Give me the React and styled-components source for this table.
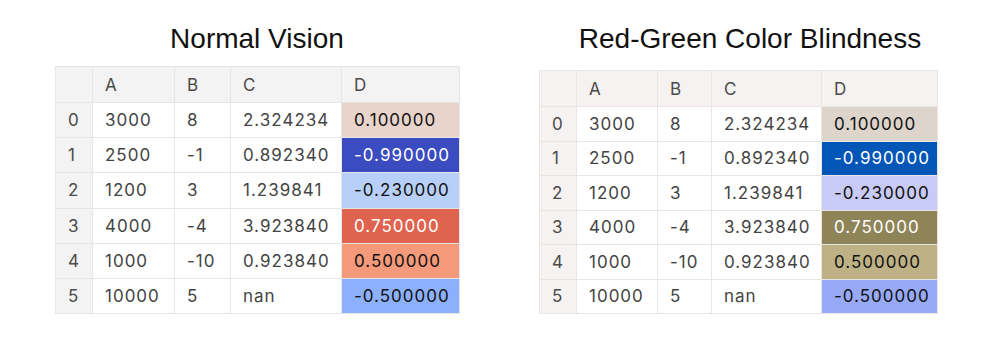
import styled, { createGlobalStyle } from "styled-components";

const GlobalStyle = createGlobalStyle`
    html, body {
        margin: 0;
        padding: 0;
        background: #FFFFFF;
    }
`;

const rows = [
    ['0', '3000', '8', '2.324234', '0.100000'],
    ['1', '2500', '-1', '0.892340', '-0.990000'],
    ['2', '1200', '3', '1.239841', '-0.230000'],
    ['3', '4000', '-4', '3.923840', '0.750000'],
    ['4', '1000', '-10', '0.923840', '0.500000'],
    ['5', '10000', '5', 'nan', '-0.500000'],
];

const normal = {
    title: 'Normal Vision',
    shift: 0,
    top: 11,
    cols: [37, 82, 56, 111, 118],
    head: 36,
    row: 35.2,
    headBg: '#F3F3F3',
    line: '#E6E6E6',
    colors: [
        ['#E8D4CA', '#111'],
        ['#3B4CC0', '#FFF'],
        ['#B8D0F9', '#111'],
        ['#DF634E', '#FFF'],
        ['#F49A7B', '#111'],
        ['#8CAFFE', '#111'],
    ],
};

const blind = {
    title: 'Red-Green Color Blindness',
    shift: 24,
    top: 15,
    cols: [37, 81, 54, 110, 116],
    head: 36,
    row: 34.5,
    headBg: '#F5F2F1',
    line: '#EAE4E2',
    colors: [
        ['#DDD5CB', '#111'],
        ['#0256B7', '#FFF'],
        ['#C7CBF5', '#111'],
        ['#8F8457', '#FFF'],
        ['#BEB185', '#111'],
        ['#97A9F8', '#111'],
    ],
};

function Panel({ data }) {
    return (
        <Column>
            <Title $shift={data.shift}>{data.title}</Title>
            <Table $top={data.top} $line={data.line}>
                <colgroup>
                    {data.cols.map((w, i) => <col key={i} style={{ width: w }} />)}
                </colgroup>
                <thead>
                    <tr style={{ height: data.head }}>
                        <Head $bg={data.headBg} $line={data.line}></Head>
                        {['A', 'B', 'C', 'D'].map((h) => (
                            <Head key={h} $bg={data.headBg} $line={data.line}>{h}</Head>
                        ))}
                    </tr>
                </thead>
                <tbody>
                    {rows.map((r, i) => (
                        <tr key={i} style={{ height: data.row }}>
                            <Head $bg={data.headBg} $line={data.line}>{r[0]}</Head>
                            <Cell $line={data.line}>{r[1]}</Cell>
                            <Cell $line={data.line}>{r[2]}</Cell>
                            <Cell $line={data.line}>{r[3]}</Cell>
                            <Cell $line={data.line} $bg={data.colors[i][0]} $fg={data.colors[i][1]}>{r[4]}</Cell>
                        </tr>
                    ))}
                </tbody>
            </Table>
        </Column>
    );
}

export default function App() {
    return (
        <Page>
            <GlobalStyle />
            <Left>
                <Panel data={normal} />
            </Left>
            <Right>
                <Panel data={blind} />
            </Right>
        </Page>
    );
}

const Page = styled.div`
    display: flex;
    width: 1000px;
    height: 350px;
    padding-top: 23px;
    box-sizing: border-box;
`;

const Left = styled.div`
    margin-left: 55px;
    width: 404px;
`;

const Right = styled.div`
    margin-left: 80px;
    width: 398px;
`;

const Column = styled.div`
    display: flex;
    flex-direction: column;
`;

const Title = styled.div`
    font-family: 'Liberation Sans', Arial, sans-serif;
    font-size: 28px;
    line-height: 32px;
    color: #111111;
    text-align: center;
    padding-left: ${(p) => p.$shift}px;
`;

const Table = styled.table`
    margin-top: ${(p) => p.$top}px;
    border-collapse: collapse;
    table-layout: fixed;
    width: 100%;
    border: 1px solid ${(p) => p.$line};
    font-family: 'Inter', 'Noto Sans', sans-serif;
    font-size: 17px;
    letter-spacing: 1px;
`;

const Head = styled.th`
    background: ${(p) => p.$bg};
    border: 1px solid ${(p) => p.$line};
    color: #4A4A4A;
    font-weight: 400;
    text-align: left;
    padding: 0 0 0 12px;
`;

const Cell = styled.td`
    background: ${(p) => p.$bg || '#FFFFFF'};
    color: ${(p) => p.$fg || '#444444'};
    border: 1px solid ${(p) => p.$line};
    padding: 0 0 0 12px;
    white-space: nowrap;
`;
